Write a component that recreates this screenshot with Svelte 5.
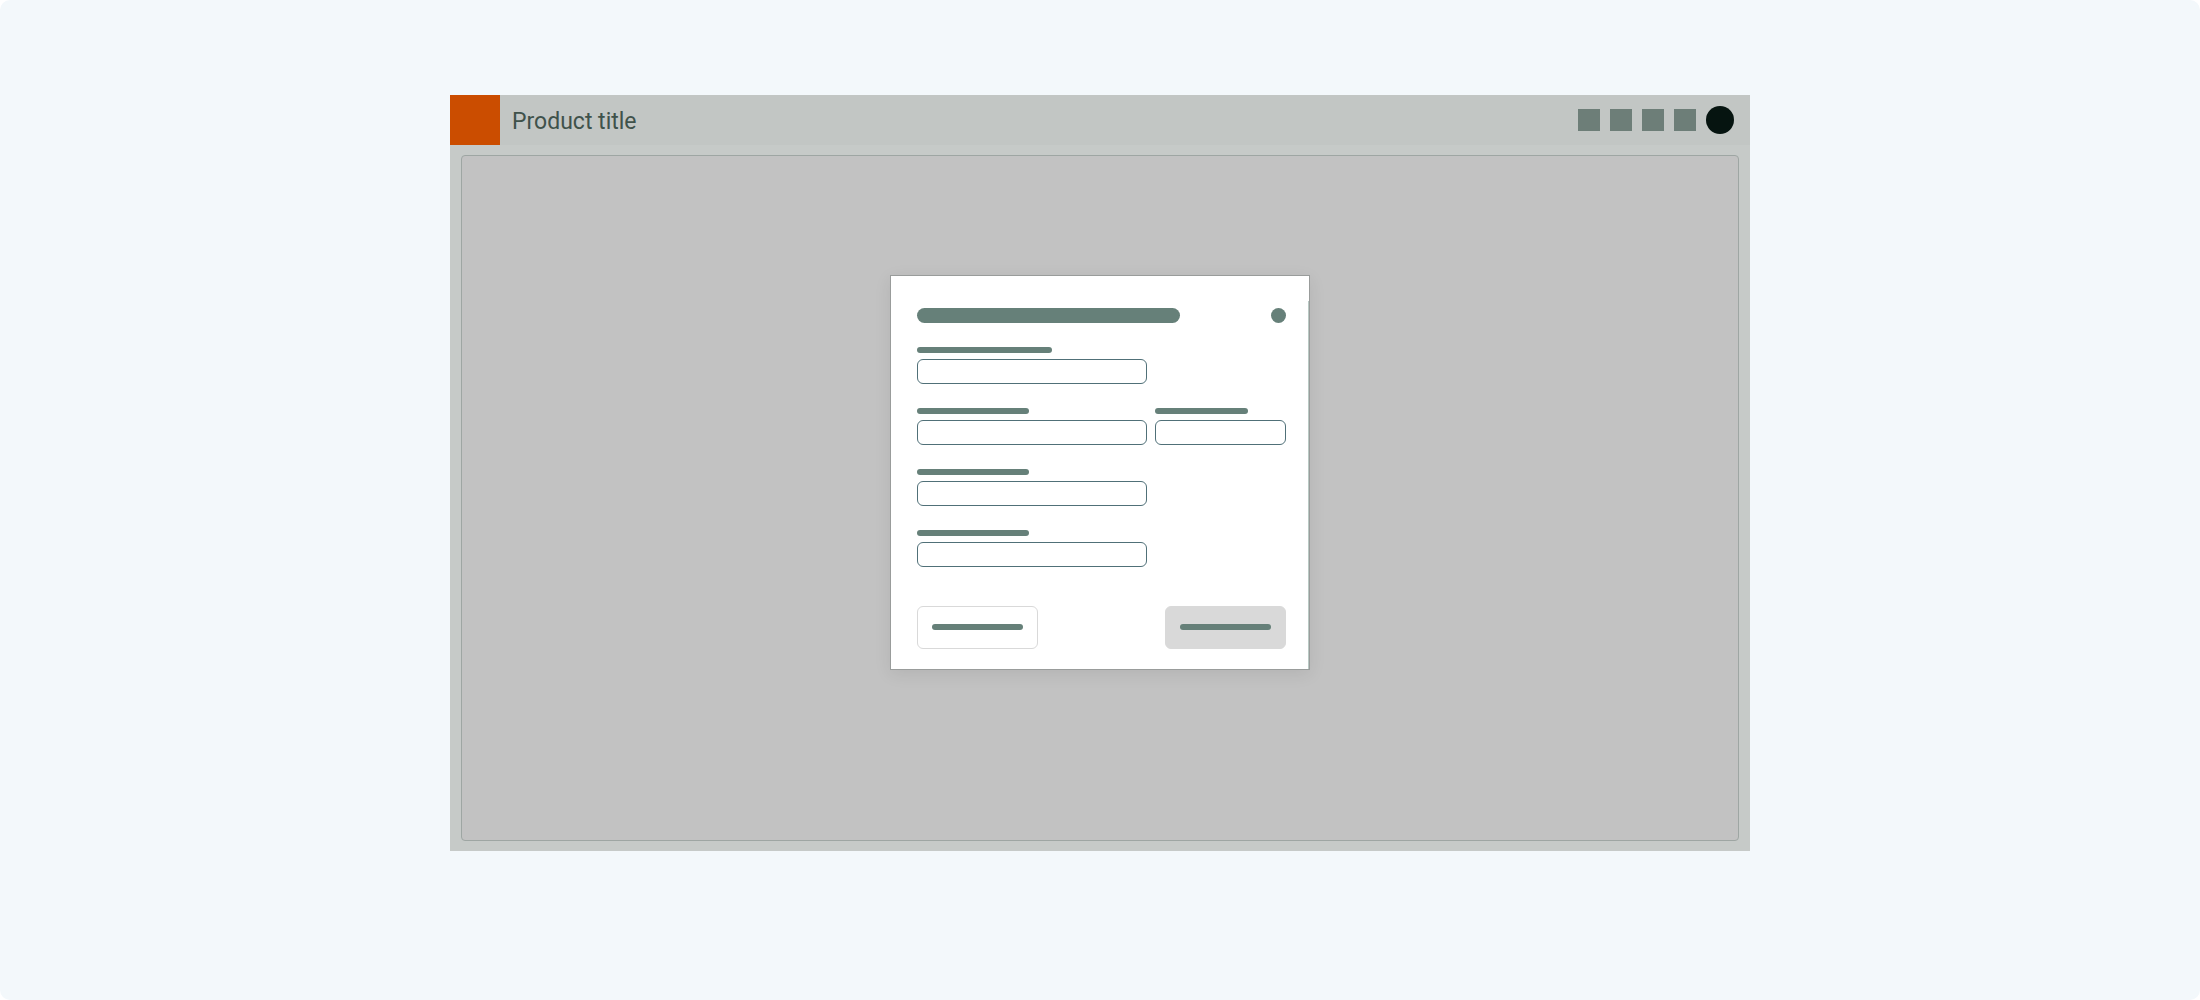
<script lang="ts">
interface Field {
  id: string;
  label: string;
  bar: "short" | "medium" | "long";
  narrow?: boolean;
}

const actions = ["Search", "Notifications", "Help", "Settings"];

const rows: Field[][] = [
  [{ id: "field-1", label: "Field 1", bar: "long" }],
  [
    { id: "field-2", label: "Field 2", bar: "medium" },
    { id: "field-3", label: "Field 3", bar: "short", narrow: true },
  ],
  [{ id: "field-4", label: "Field 4", bar: "medium" }],
  [{ id: "field-5", label: "Field 5", bar: "medium" }],
];
</script>

<div class="page">
  <div class="app">
    <header class="topbar">
      <div class="logo"></div>
      <span class="product">Product title</span>
      <nav class="actions">
        {#each actions as action (action)}
          <button class="action" type="button" aria-label={action}></button>
        {/each}
        <button class="avatar" type="button" aria-label="Account"></button>
      </nav>
    </header>

    <main class="content"></main>

    <div class="overlay">
      <form class="modal" role="dialog" aria-label="Dialog">
        <div class="modal-header">
          <div class="title"></div>
          <button class="close" type="button" aria-label="Close"></button>
        </div>

        <div class="fields">
          {#each rows as row}
            <div class="row">
              {#each row as field (field.id)}
                <div class="field" class:narrow={field.narrow}>
                  <label class="bar {field.bar}" for={field.id} aria-label={field.label}></label>
                  <input id={field.id} type="text" />
                </div>
              {/each}
            </div>
          {/each}
        </div>

        <footer class="modal-footer">
          <button class="btn" type="button" aria-label="Cancel"><span class="bar"></span></button>
          <button class="btn primary" type="button" aria-label="Save"><span class="bar"></span></button>
        </footer>
      </form>
    </div>
  </div>
</div>

<style>
  :global(body) {
    margin: 0;
    background: #fff;
  }

  .page,
  .page * {
    box-sizing: border-box;
  }

  .page {
    display: flex;
    justify-content: center;
    min-height: 100vh;
    padding: 95px 24px 149px;
    border-radius: 10px;
    background: #f3f8fb;
    font-family: Roboto, "Liberation Sans", sans-serif;
  }

  .app {
    position: relative;
    display: flex;
    flex-direction: column;
    width: 100%;
    max-width: 1300px;
    background: #c6cac8;
  }

  .topbar {
    display: flex;
    align-items: center;
    height: 50px;
    padding-right: 16px;
    background: #c2c6c4;
  }

  .logo {
    width: 50px;
    height: 50px;
    background: #cb4d00;
  }

  .product {
    padding: 4px 0 0 12px;
    font-size: 23px;
    line-height: 30px;
    color: #3f524b;
  }

  .actions {
    display: flex;
    align-items: center;
    gap: 10px;
    margin-left: auto;
  }

  button {
    padding: 0;
    border: none;
    cursor: pointer;
  }

  .action {
    width: 22px;
    height: 22px;
    background: #6d7e78;
  }

  .avatar {
    width: 28px;
    height: 28px;
    border-radius: 50%;
    background: #061410;
  }

  .content {
    flex: 1;
    margin: 10px 11px;
    border: 1px solid #9ea6a3;
    border-radius: 4px;
    background: #c2c2c2;
  }

  .overlay {
    position: absolute;
    inset: 0;
    display: flex;
    align-items: center;
    justify-content: center;
    padding-bottom: 1px;
  }

  .modal {
    width: 420px;
    padding: 32px 23px 20px 26px;
    border: 1px solid #999c9b;
    /* scroll track along the right edge, starting below the top corner */
    background: linear-gradient(#b9c9c4, #b9c9c4) right 25px / 1px 100% no-repeat #fff;
    background-position: right 0 top 25px;
    box-shadow: 0 4px 16px rgba(0, 0, 0, 0.08);
  }

  .modal-header {
    display: flex;
    align-items: center;
    justify-content: space-between;
    margin-bottom: 24px;
  }

  .title {
    width: 263px;
    height: 15px;
    border-radius: 8px;
    background: #668079;
  }

  .close {
    width: 15px;
    height: 15px;
    border-radius: 50%;
    background: #668079;
  }

  .fields {
    display: flex;
    flex-direction: column;
    gap: 24px;
  }

  .row {
    display: flex;
    gap: 8px;
  }

  .field {
    display: flex;
    flex-direction: column;
    gap: 6px;
    width: 230px;
  }

  .field.narrow {
    flex: 1;
    width: auto;
  }

  .bar {
    display: block;
    width: 91px;
    height: 6px;
    border-radius: 3px;
    background: #668079;
  }

  .bar.short {
    width: 93px;
  }

  .bar.medium {
    width: 112px;
  }

  .bar.long {
    width: 135px;
  }

  input {
    width: 100%;
    height: 25px;
    margin: 0;
    padding: 0 8px;
    border: 1px solid #507078;
    border-radius: 6px;
    background: #fff;
    font: inherit;
    font-size: 14px;
    outline: none;
  }

  .modal-footer {
    display: flex;
    justify-content: space-between;
    margin-top: 39px;
  }

  .btn {
    display: flex;
    align-items: center;
    justify-content: center;
    width: 121px;
    height: 43px;
    padding-bottom: 1px;
    border: 1px solid #d9d9d9;
    border-radius: 6px;
    background: #fff;
  }

  .btn.primary {
    background: #d9d9d9;
  }
</style>
